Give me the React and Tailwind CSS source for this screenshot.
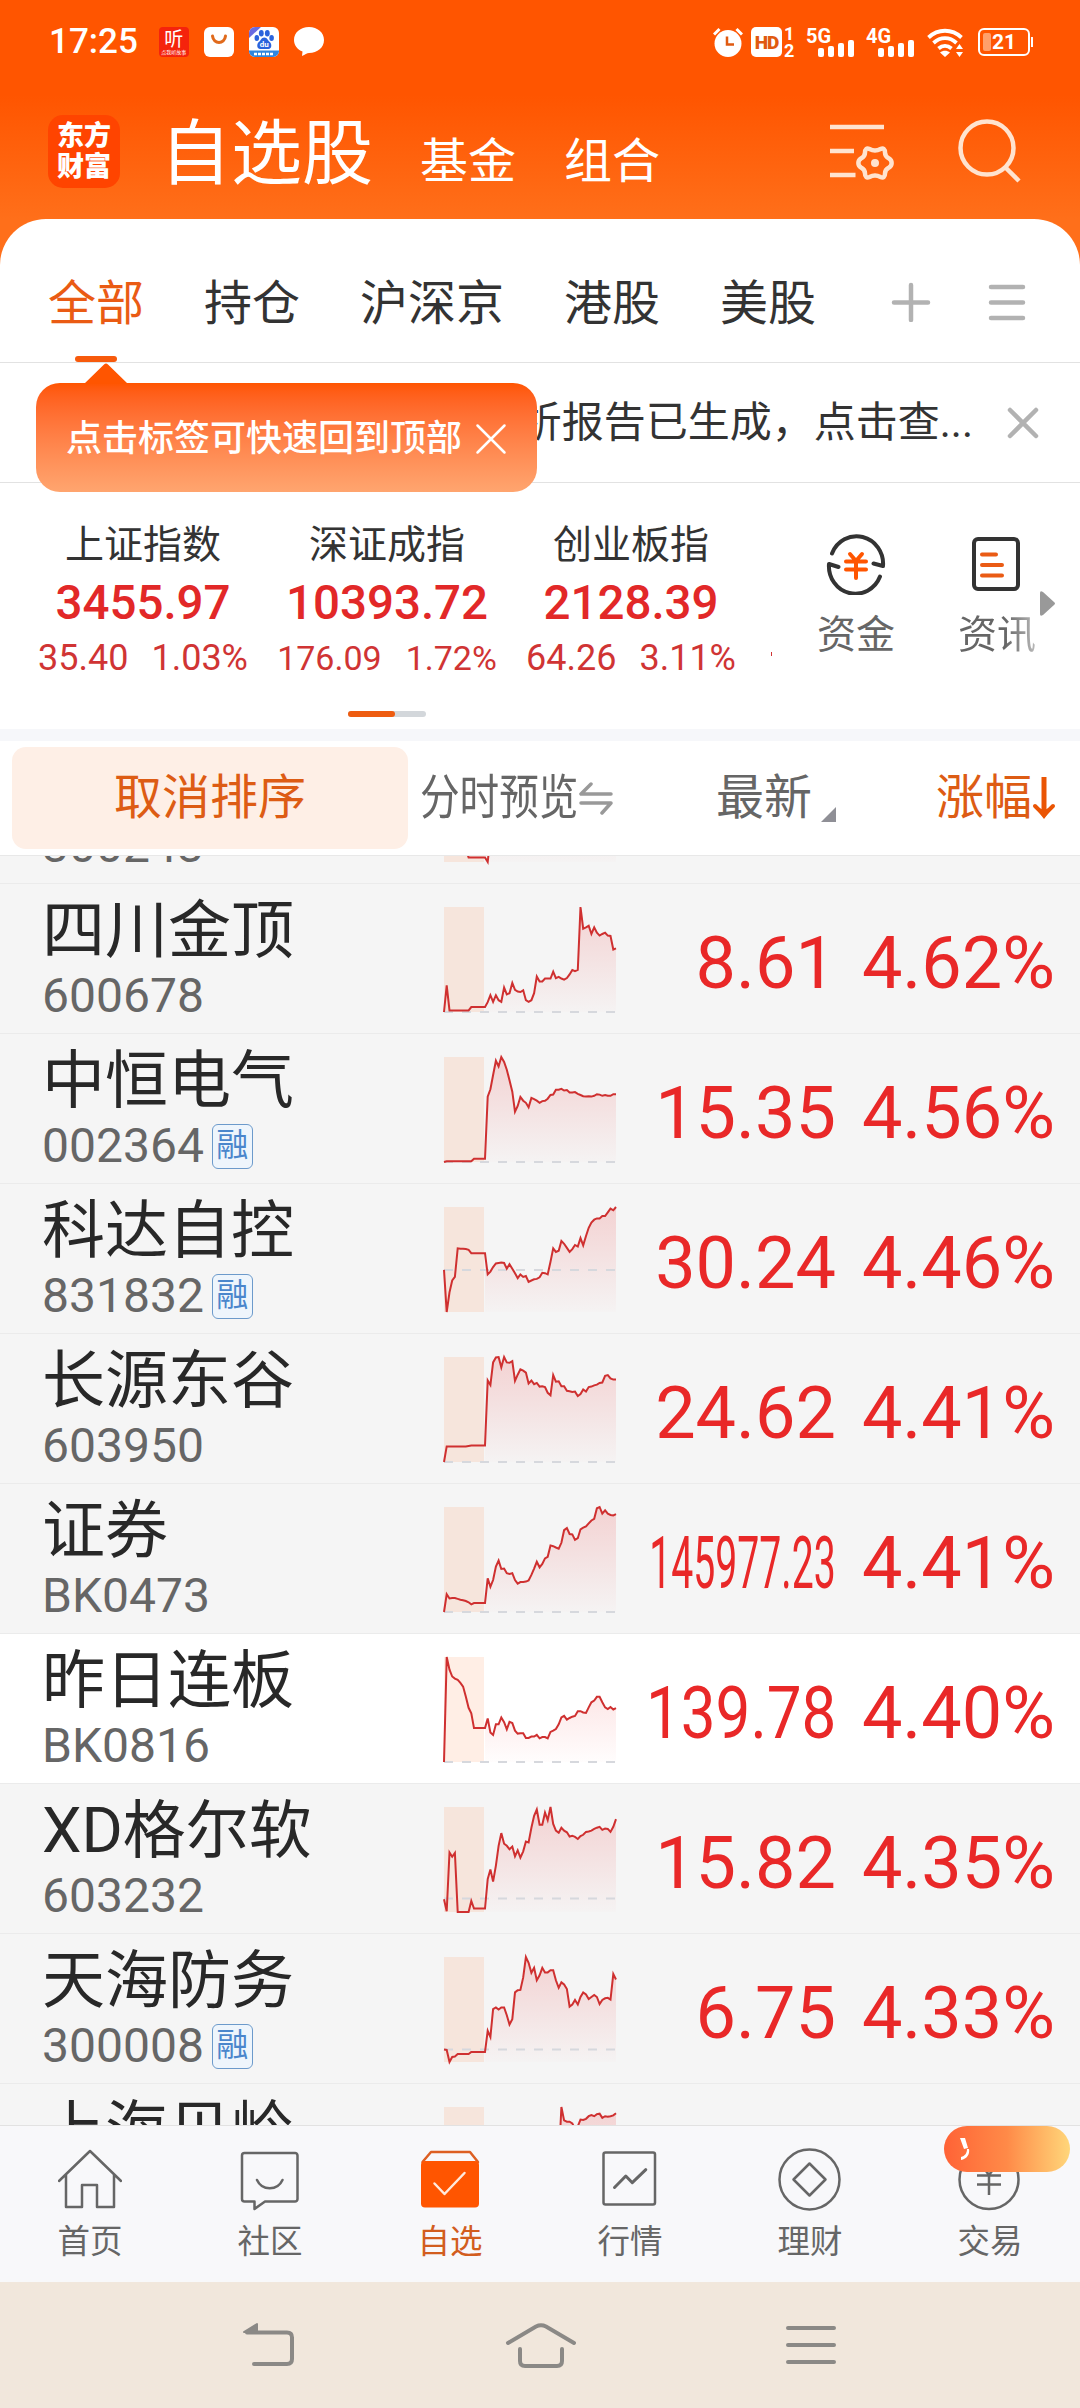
import React from "react";
import clsx from "clsx";

const tabs = ["全部", "持仓", "沪深京", "港股", "美股"];

const indexes = [
  { name: "上证指数", value: "3455.97", change: "35.40", rate: "1.03%" },
  { name: "深证成指", value: "10393.72", change: "176.09", rate: "1.72%", small: true },
  { name: "创业板指", value: "2128.39", change: "64.26", rate: "3.11%" },
];

// trend: 64 samples, base: the dashed "previous close" level
const stocks = [
  {
    name: "",
    code: "300243",
    price: "",
    rate: "",
    base: 120,
    trend: [90, 80, 70, 60, 50, 40, 30, 30, 30, 11, 11, 11, 11, 11, 11, 11, 0, 60, 120, 180, 200, 190, 180, 170, 180, 190, 200, 210, 220, 230, 240, 250, 240, 230, 220, 210, 200, 200, 200, 200, 200, 200, 200, 200, 200, 200, 200, 200, 200, 200, 200, 200, 200, 200, 200, 200, 200, 200, 200, 200, 200, 200, 200, 200],
  },
  {
    name: "四川金顶",
    code: "600678",
    price: "8.61",
    rate: "4.62%",
    base: 0,
    trend: [0, 65, 4, 4, 4, 4, 4, 4, 4, 4, 12, 12, 12, 12, 12, 12, 24, 41, 25, 41, 29, 25, 60, 43, 46, 71, 54, 50, 49, 53, 29, 25, 29, 46, 87, 75, 75, 82, 82, 82, 99, 83, 86, 82, 79, 83, 92, 103, 100, 103, 257, 204, 207, 211, 191, 207, 194, 187, 191, 194, 187, 186, 153, 156],
  },
  {
    name: "中恒电气",
    code: "002364",
    margin: true,
    price: "15.35",
    rate: "4.56%",
    base: 0,
    trend: [0, 2, 2, 2, 2, 2, 2, 2, 2, 2, 2, 8, 8, 8, 8, 8, 160, 178, 213, 248, 234, 257, 245, 226, 200, 172, 123, 137, 159, 150, 145, 134, 157, 154, 150, 145, 149, 150, 155, 164, 165, 177, 177, 179, 175, 176, 170, 170, 171, 167, 164, 161, 160, 161, 160, 162, 166, 165, 162, 164, 162, 162, 166, 166],
  },
  {
    name: "科达自控",
    code: "831832",
    margin: true,
    price: "30.24",
    rate: "4.46%",
    base: 103,
    trend: [103, 0, 48, 77, 86, 156, 155, 155, 154, 152, 144, 144, 144, 144, 144, 144, 92, 99, 110, 119, 120, 121, 120, 106, 117, 106, 95, 83, 92, 86, 88, 74, 77, 80, 81, 85, 96, 95, 92, 123, 156, 147, 150, 174, 167, 157, 147, 154, 164, 160, 181, 163, 186, 206, 219, 226, 229, 229, 235, 235, 244, 253, 249, 257],
  },
  {
    name: "长源东谷",
    code: "603950",
    price: "24.62",
    rate: "4.41%",
    base: 0,
    trend: [0, 38, 38, 38, 38, 38, 38, 38, 38, 39, 40, 40, 40, 40, 40, 40, 198, 187, 242, 254, 255, 230, 255, 242, 241, 245, 197, 212, 225, 222, 217, 191, 198, 189, 192, 183, 184, 182, 168, 162, 211, 195, 196, 184, 184, 173, 172, 170, 171, 160, 165, 176, 171, 182, 183, 186, 188, 192, 193, 209, 211, 203, 200, 200],
  },
  {
    name: "证券",
    code: "BK0473",
    price: "145977.23",
    fit: "scale-x-[0.544]",
    rate: "4.41%",
    base: 0,
    trend: [0, 42, 32, 33, 33, 31, 29, 28, 26, 23, 18, 21, 21, 21, 21, 21, 80, 60, 76, 108, 122, 102, 103, 92, 90, 92, 76, 67, 71, 71, 72, 75, 88, 103, 119, 106, 114, 127, 131, 158, 156, 153, 150, 164, 194, 199, 185, 184, 171, 175, 196, 200, 203, 210, 217, 221, 246, 249, 233, 241, 233, 230, 229, 232],
  },
  {
    name: "昨日连板",
    code: "BK0816",
    price: "139.78",
    fit: "scale-x-[0.86]",
    rate: "4.40%",
    plain: true,
    base: 0,
    trend: [0, 248, 218, 202, 197, 194, 187, 178, 155, 128, 115, 80, 80, 80, 80, 80, 103, 70, 64, 89, 89, 105, 94, 77, 95, 92, 74, 67, 68, 68, 57, 57, 60, 60, 64, 56, 59, 59, 56, 71, 74, 78, 89, 105, 109, 100, 104, 107, 109, 120, 120, 117, 116, 129, 141, 145, 154, 154, 141, 129, 125, 130, 124, 127],
  },
  {
    name: "XD格尔软",
    code: "603232",
    price: "15.82",
    rate: "4.35%",
    base: 32,
    trend: [30, 2, 141, 131, 140, 0, 0, 0, 0, 0, 26, 8, 8, 8, 8, 8, 78, 101, 72, 110, 157, 187, 162, 157, 149, 155, 132, 146, 129, 144, 167, 165, 200, 228, 243, 207, 207, 236, 218, 249, 209, 193, 188, 200, 193, 189, 179, 181, 178, 173, 180, 183, 190, 191, 193, 197, 200, 202, 195, 198, 197, 190, 202, 220],
  },
  {
    name: "天海防务",
    code: "300008",
    margin: true,
    price: "6.75",
    rate: "4.33%",
    base: 30,
    trend: [30, 29, 0, 12, 13, 19, 19, 19, 19, 19, 24, 24, 24, 24, 24, 24, 75, 60, 127, 131, 126, 131, 131, 112, 90, 103, 167, 172, 173, 203, 252, 238, 214, 226, 196, 208, 226, 215, 215, 220, 220, 196, 178, 191, 186, 175, 133, 138, 149, 138, 156, 167, 162, 151, 156, 161, 156, 139, 149, 153, 154, 150, 211, 198],
  },
  {
    name: "上海贝岭",
    code: "600171",
    price: "",
    rate: "",
    base: 0,
    trend: [0, 10, 10, 10, 10, 10, 10, 10, 10, 10, 10, 10, 10, 10, 10, 10, 30, 40, 50, 60, 60, 60, 60, 60, 60, 60, 60, 60, 60, 60, 60, 60, 60, 60, 60, 60, 60, 60, 60, 60, 60, 60, 120, 250, 218, 215, 215, 211, 198, 204, 220, 219, 222, 228, 231, 228, 233, 234, 224, 228, 227, 228, 230, 235],
  },
];

const navItems = [
  {
    label: "首页",
    icon: <path d="M1 33 32 3l31 30M8 27v32h16V37h15v22h17V27" />,
  },
  {
    label: "社区",
    icon: (
      <path d="M6.500 5H57a2.500 2.500 0 0 1 2.500 2.500V51a2.500 2.500 0 0 1-2.500 2.500H27L16.500 61v-7.500h-10A2.500 2.500 0 0 1 4 51V7.500A2.500 2.500 0 0 1 6.500 5zM19 32c5 11 20.500 11 25.500 0" />
    ),
  },
  {
    label: "自选",
    active: true,
    icon: (
      <>
        <path d="M4.500 14 13 4h39l8 10" stroke="#dd5f22" />
        <rect x="3" y="13" width="58" height="46.500" rx="4" fill="#ff5500" stroke="none" />
        <path d="m16.500 35.500 10 10.500 20-21" stroke="#ffe9dc" />
      </>
    ),
  },
  {
    label: "行情",
    icon: (
      <>
        <rect x="5.500" y="4.500" width="51.500" height="52" rx="2" />
        <path d="m16.500 39.500 11.300-11.500 6.500 6.700 13.500-13" strokeWidth="3" />
      </>
    ),
  },
  {
    label: "理财",
    icon: (
      <>
        <circle cx="31.500" cy="31.500" r="30" />
        <path d="m31.500 15.500 16 16-16 16-16-16z" />
      </>
    ),
  },
  {
    label: "交易",
    badge: true,
    icon: (
      <>
        <circle cx="31" cy="31.500" r="29.500" />
        <path d="M19 27.500h24M19 36.500h24M31 47V27M22 15l9 12 9-12" strokeLinecap="butt" />
      </>
    ),
  },
];

const SignalBars = ({ label }) => (
  <div className="relative h-[30px] w-[48px]">
    <span className="absolute -top-[2px] left-0 text-[20px] leading-[22px] font-bold">{label}</span>
    <div className="flex h-[30px] items-end justify-end gap-[4px]">
      <span className="h-[9px] w-[6px] rounded-[2px] bg-white"></span>
      <span className="h-[11px] w-[6px] rounded-[2px] bg-white"></span>
      <span className="h-[14px] w-[6px] rounded-[2px] bg-white"></span>
      <span className="h-[17px] w-[6px] rounded-[2px] bg-white"></span>
    </div>
  </div>
);

const StatusBar = () => (
  <div className="flex h-[84px] items-center justify-between pr-[47px] pl-[49px] text-white">
    <div className="flex items-center gap-[15px]">
      <span className="mr-[6px] text-[35px] leading-[36px] font-medium">17:25</span>
      <div className="flex h-[30px] w-[30px] flex-col items-center justify-center rounded-[4px] bg-[#f5230c]">
        <span className="h-[19px] text-[19px] leading-[19px]">听</span>
        <span className="h-[6px] text-[5px] leading-[6px]">点我听故事</span>
      </div>
      <svg className="h-[30px] w-[30px]" viewBox="0 0 30 30">
        <rect width="30" height="30" rx="6" fill="#fff" />
        <path d="M8.500 9c1 8.500 12 8.500 13 0" fill="none" stroke="#e06a1c" strokeWidth="3" strokeLinecap="round" />
      </svg>
      <svg className="h-[30px] w-[30px]" viewBox="0 0 30 30">
        <rect width="30" height="30" rx="6" fill="#fff" />
        <path d="M0 11V6a6 6 0 0 1 6-6h6z" fill="#6a6be0" />
        <path d="M0 23.500h30a6 6 0 0 1-6 6.500H6a6 6 0 0 1-6-6.500z" fill="#2f86e0" />
        <g fill="#2b63dc">
          <ellipse cx="12.300" cy="6.200" rx="2.400" ry="3.300" />
          <ellipse cx="18.300" cy="6.200" rx="2.400" ry="3.300" />
          <ellipse cx="7.800" cy="11" rx="2.300" ry="3" />
          <ellipse cx="22.600" cy="11" rx="2.300" ry="3" />
          <path d="M15.300 10.500c3 0 3.500 3 5.500 4.500s2.500 7-1.500 7h-8c-4 0-3.500-5.500-1.500-7s2.500-4.500 5.500-4.500z" />
        </g>
        <text x="15.200" y="20" fontSize="8" fontWeight="700" fill="#fff" textAnchor="middle">
          du
        </text>
        <path d="M5 27h20" stroke="#fff" strokeWidth="2.500" strokeDasharray="3 1" />
      </svg>
      <svg className="h-[30px] w-[30px]" viewBox="0 0 30 30">
        <path d="M15 0c8.500 0 15 5.500 15 13S23.500 26 15 26c-2 0-4 1.500-7 3l.5-4.500C3.500 22.500 0 18.500 0 13 0 5.500 6.500 0 15 0z" fill="#fff" />
      </svg>
    </div>

    <div className="flex items-center">
      <svg className="h-[30px] w-[30px]" viewBox="0 0 30 30">
        <circle cx="15" cy="16.500" r="13.500" fill="#fff" />
        <path d="M1 7.500 6.500 2M23.500 2 29 7.500" stroke="#fff" strokeWidth="3" />
        <path d="M14 9.500v8h7" fill="none" stroke="#e05a10" strokeWidth="2.500" />
      </svg>
      <div className="ml-[8px] flex h-[30px] w-[31px] items-center justify-center rounded-[5px] bg-white text-[19px] leading-none font-black tracking-tighter text-[#e05a10]">
        HD
      </div>
      <div className="ml-[2px] flex h-[34px] w-[12px] flex-col text-[18px] leading-[17px] font-bold">
        <span>1</span>
        <span>2</span>
      </div>
      <div className="ml-[10px] flex gap-[12px]">
        <SignalBars label="5G" />
        <SignalBars label="4G" />
      </div>
      <svg className="ml-[13px] h-[30px] w-[38px]" viewBox="0 0 38 30">
        <g fill="none" stroke="#fff" strokeWidth="3.800">
          <path d="M1.500 10.500c9.500-9 23.500-9 33 0" />
          <path d="M6.500 16c7-6.500 16-6.500 23 0" />
          <path d="M11.500 21.500c4-3.500 9-3.500 13 0" />
        </g>
        <path d="m18 30-5-4.500c3-2.500 7-2.500 10 0zM29 22l3.500-5 3.500 5zM29 25l3.500 5 3.500-5z" fill="#fff" />
      </svg>
      <div className="ml-[13px] flex h-[28px] w-[52px] items-center rounded-[6px] border-2 border-white pl-[3px]">
        <span className="h-[18px] w-[8px] rounded-[2px] bg-[#ffa06b]"></span>
        <span className="ml-[1px] text-[21px] leading-[22px] font-bold">21</span>
      </div>
      <span className="ml-[1px] h-[10px] w-[2px] bg-white"></span>
    </div>
  </div>
);

const Header = () => (
  <div className="flex h-[135px] text-white">
    <div className="mt-[31px] ml-[48px] flex h-[73px] w-[72px] flex-col items-center justify-center rounded-[15px] bg-[#ff4400] text-[27px] leading-[31px] font-black">
      <span>东方</span>
      <span>财富</span>
    </div>
    <div className="mt-[18px] ml-[40px] flex h-[104px] items-baseline">
      <span className="text-[71px] leading-[104px]">自选股</span>
      <span className="ml-[47px] text-[48px]">基金</span>
      <span className="ml-[48px] text-[48px]">组合</span>
    </div>
    <svg className="mt-[35px] ml-auto h-[66px] w-[66px]" viewBox="0 0 66 66" fill="none" stroke="#ffe3cf" strokeWidth="4.500">
      <path d="M1 8h54M1 32h24M1 56h25.500" />
      <path
        d="M40.500 30q5.500 3 11 0c3-1.500 4.500 .5 4.500 3.500 0 3 1 4.500 4 6 3.500 2 3.500 7 0 9-3 1.500-4 3-4 6 0 3-1.500 5-4.500 3.500q-5.500-3-11 0c-3 1.500-4.500-.5-4.500-3.500 0-3-1-4.500-4-6-3.500-2-3.500-7 0-9 3-1.500 4-3 4-6 0-3 1.500-5 4.500-3.500z"
        strokeWidth="4.500"
      />
      <circle cx="46" cy="44" r="4" fill="#ffe3cf" stroke="none" />
    </svg>
    <svg className="mt-[33px] mr-[58px] ml-[61px] h-[66px] w-[66px]" viewBox="0 0 66 66" fill="none" stroke="#ffe3cf" strokeWidth="4.500">
      <circle cx="31" cy="31" r="26.500" />
      <path d="m49 50 14 14" />
    </svg>
  </div>
);

const TabBar = () => (
  <div className="flex h-[144px] rounded-t-[46px] border-b border-[#e2e2e2] bg-white pl-[48px]">
    <div className="flex h-full gap-[60px]">
      {tabs.map((tab, index) => (
        <div
          key={tab}
          className={clsx(
            "relative h-full pt-[52px] text-[48px] leading-[66px] whitespace-nowrap",
            index === 0 ? "text-[#ea5b14]" : "text-[#333]"
          )}
        >
          {tab}
          {index === 0 && (
            <span className="absolute bottom-0 left-[27px] h-[6px] w-[42px] rounded-full bg-[#f75a0c]"></span>
          )}
        </div>
      ))}
    </div>
    <svg className="mt-[63px] ml-[75px] h-[40px] w-[40px]" viewBox="0 0 40 40" stroke="#b2b2b2" strokeWidth="4.500" strokeLinecap="round">
      <path d="M20 3v35M3 20.500h34" />
    </svg>
    <svg className="mt-[63px] ml-[57px] h-[40px] w-[38px]" viewBox="0 0 38 40" stroke="#b2b2b2" strokeWidth="4.500" strokeLinecap="round">
      <path d="M3 5h32M3 20.500h32M3 36h32" />
    </svg>
  </div>
);

const Notice = () => (
  <div className="relative flex h-[120px] items-center justify-end border-b border-[#e2e2e2] bg-white pr-[41px]">
    <span className="text-[42px] leading-[60px] text-[#333]">析报告已生成，点击查...</span>
    <svg className="ml-[34px] h-[32px] w-[32px]" viewBox="0 0 32 32" stroke="#b2b2b2" strokeWidth="4.500" strokeLinecap="round">
      <path d="m3 3 26 26M29 3 3 29" />
    </svg>

    {/* tip bubble that points at the first tab */}
    <div className="absolute top-0 left-[36px] z-10">
      <svg className="ml-[48px] h-[21px] w-[44px]" viewBox="0 0 44 21">
        <path d="M0 21 20 1.500q2-2 4 0L44 21z" fill="#ff5500" />
      </svg>
      <div className="-mt-px flex h-[109px] w-[501px] items-center rounded-[24px] bg-linear-to-b from-[#ff5500] to-[#ffa56f] pt-[2px] pl-[30px] text-white">
        <span className="text-[36px] leading-[50px] font-medium whitespace-nowrap">点击标签可快速回到顶部</span>
        <svg className="ml-[13px] h-[32px] w-[32px]" viewBox="0 0 32 32" stroke="#fff" strokeWidth="2.500" strokeLinecap="round">
          <path d="m2.500 2.500 27 27M29.500 2.500l-27 27" />
        </svg>
      </div>
    </div>
  </div>
);

const IndexPanel = () => (
  <div className="relative h-[246px] bg-white">
    <div className="flex">
      <div className="flex w-[773px] pl-[21px]">
        {indexes.map((item) => (
          <div key={item.name} className="flex w-[244px] flex-col items-center whitespace-nowrap">
            <span className="mt-[33px] h-[57px] text-[39px] leading-[58px] text-[#333]">{item.name}</span>
            <span className="h-[60px] text-[47.500px] leading-[60px] font-medium text-[#e22828]">{item.value}</span>
            <span
              className={clsx(
                "flex h-[50px] text-[#d03434]",
                item.small ? "gap-[24px] text-[34px] leading-[51px]" : "gap-[23px] text-[36px] leading-[50px]"
              )}
            >
              <span>{item.change}</span>
              <span>{item.rate}</span>
            </span>
          </div>
        ))}
        <span className="mt-[169px] ml-[18px] h-[4px] w-px shrink-0 bg-[#d03434]"></span>
      </div>
      <div className="ml-[44px] flex w-[78px] flex-col items-center">
        <svg className="mt-[50px] h-[62px] w-[62px]" viewBox="0 0 62 62" fill="none" stroke="#333" strokeWidth="4" strokeLinecap="round" strokeLinejoin="round">
          <path d="M7 20.500A26.500 27.500 0 0 1 58 33L48.500 30.500" />
          <path d="M55 43.500A26.500 27.500 0 0 1 4 31L13.500 34" />
          <g stroke="#ff5500">
            <path d="m25 21 6 7 6-7M21 28.500h20M21 36.500h20M31 28v17" />
          </g>
        </svg>
        <span className="text-[39px] leading-[80px] text-[#666]">资金</span>
      </div>
      <div className="ml-[63px] flex w-[78px] flex-col items-center">
        <svg className="mt-[50px] h-[62px] w-[62px]" viewBox="0 0 62 62" fill="none" strokeWidth="4" strokeLinecap="round">
          <rect x="8" y="6" width="44" height="50" rx="4" stroke="#333" />
          <path d="M16 21.500h14M16 32h20M16 42.500h20" stroke="#ea5b14" />
        </svg>
        <span className="bg-linear-to-r from-[#666] from-60% to-[#bbb] bg-clip-text text-[39px] leading-[80px] text-transparent">资讯</span>
      </div>
      <svg className="mt-[108px] ml-[4px] h-[25px] w-[15px]" viewBox="0 0 15 25">
        <path d="M0 2q0-3 3-1l11 10q2 1.500 0 3L3 24q-3 2-3-1z" fill="#999" />
      </svg>
    </div>
    <div className="absolute bottom-[12px] left-[348px] h-[6px] w-[78px] rounded-full bg-[#d3d7db]">
      <div className="h-full w-[47px] rounded-full bg-[#ee5c10]"></div>
    </div>
  </div>
);

const ListHeader = () => (
  <div className="flex h-[126px] items-center border-t-[12px] border-[#f6f7fa] bg-white pl-[12px] text-[48px] leading-[102px] whitespace-nowrap text-[#666]">
    <div className="h-[102px] w-[396px] rounded-[14px] bg-[#feefe6] text-center text-[#dd5c14]">取消排序</div>
    <div className="ml-[12px] h-[102px] w-[158px]">
      <span className="inline-block origin-left scale-x-[0.825]">分时预览</span>
    </div>
    <svg className="h-[34px] w-[36px]" viewBox="0 0 36 34" fill="none" stroke="#999" strokeWidth="3.500" strokeLinecap="round" strokeLinejoin="round">
      <path d="M13 3 3 13h30M3 22h30L24 32" />
    </svg>
    <span className="ml-[102px] h-[102px]">最新</span>
    <svg className="mt-[33px] ml-[9px] h-[15px] w-[15px]" viewBox="0 0 15 15">
      <path d="M15 0v15H0z" fill="#8f8f96" />
    </svg>
    <span className="ml-[100px] h-[102px] text-[#dd5c14]">涨幅</span>
    <svg className="h-[44px] w-[24px]" viewBox="0 0 24 44" fill="none" stroke="#ea5504" strokeWidth="5">
      <path d="M12 1v34" />
      <path d="m3 30 9 9 9-9" strokeWidth="4" strokeLinecap="round" />
      <path d="m2 30 10 13 10-13-10 4z" fill="#ea5504" stroke="none" />
    </svg>
  </div>
);

const TrendChart = ({ id, trend, base }) => {
  const width = 172;
  const height = 105;
  const max = Math.max(...trend);
  const y = (value) => height - (value / max) * height;
  const points = trend.map((value, index) => [(index * width) / (trend.length - 1), y(value)]);
  const line = points.map(([px, py]) => `${px.toFixed(1)},${py.toFixed(1)}`).join(" ");
  const area = points
    .slice(15)
    .map(([px, py]) => `${px.toFixed(1)},${py.toFixed(1)}`)
    .join(" ");

  return (
    <svg className="mt-[23px] h-[105px] w-[172px] overflow-visible" viewBox="0 0 172 105">
      <defs>
        <linearGradient id={id} gradientUnits="userSpaceOnUse" x1="0" y1="0" x2="0" y2="105">
          <stop offset="0" stopColor="#eb2727" stopOpacity="0.17" />
          <stop offset="1" stopColor="#eb2727" stopOpacity="0.01" />
        </linearGradient>
      </defs>
      <rect width="40" height="105" fill="#ff5500" fillOpacity="0.1" />
      <polygon points={`41,105 ${area} 172,105`} fill={`url(#${id})`} />
      <path d={`M0 ${y(base)}H172`} stroke="#d6d8dd" strokeWidth="2" strokeDasharray="9 9" />
      <polyline points={line} fill="none" stroke="#cf3030" strokeWidth="2" />
    </svg>
  );
};

const StockRow = ({ stock, id }) => (
  <div className={clsx("flex h-[150px] border-t border-[#ebebeb] pl-[42px]", stock.plain ? "bg-white" : "bg-[#f5f5f5]")}>
    <div className="w-[402px] whitespace-nowrap">
      <div className="h-[88px] pt-[4px] text-[63px] leading-[86px] text-[#282828]">{stock.name}</div>
      <div className="flex h-[48px] items-center">
        <span className="text-[48px] leading-[48px] text-[#666]">{stock.code}</span>
        {stock.margin && (
          <span className="ml-[8px] h-[45px] w-[41px] rounded-[6px] border border-[#6c9acb] bg-[#eef5fc] text-center text-[32px] leading-[41px] text-[#4a86cc]">
            融
          </span>
        )}
      </div>
    </div>
    <TrendChart id={id} trend={stock.trend} base={stock.base} />
    <div className="flex w-[220px] justify-end text-[72px] leading-[159px] text-[#e92828]">
      <span className={clsx("origin-right", stock.fit)}>{stock.price}</span>
    </div>
    <div className="w-[219px] text-right text-[72px] leading-[159px] text-[#e92828]">{stock.rate}</div>
  </div>
);

const BottomNav = () => (
  <div className="grid h-[157px] grid-cols-6 border-t border-[#e2e2e2] bg-[#f8f8fa]">
    {navItems.map((item) => (
      <div key={item.label} className="relative flex flex-col items-center pt-[22px]">
        <svg className="h-[64px] w-[64px]" viewBox="0 0 64 64" fill="none" stroke="#666" strokeWidth="2.500" strokeLinecap="round" strokeLinejoin="round">
          {item.icon}
        </svg>
        <span className={clsx("mt-[6px] text-[32.500px] leading-[48px]", item.active ? "text-[#d25d1e]" : "text-[#666]")}>
          {item.label}
        </span>
        {item.badge && (
          <div className="absolute top-0 left-[44px] h-[46px] w-[126px] rounded-full bg-linear-to-r from-[#ff6236] via-[#ff8a48] to-[#ffd67a]">
            <svg className="mt-[12px] ml-[16px] h-[22px] w-[10px]" viewBox="0 0 10 22" fill="#fff">
              <path d="M0 0h5l3 10-4 1zM7 11h2c1 5-2 10-8 11v-3c4-1 6-4 6-8z" />
            </svg>
          </div>
        )}
      </div>
    ))}
  </div>
);

const SystemNav = () => (
  <div className="flex h-[126px] items-start bg-[#f1e7dc] pt-[36px] pl-[241px]">
    <svg className="h-[54px] w-[56px]" viewBox="0 0 56 54" fill="none" stroke="#8b8986" strokeWidth="4" strokeLinecap="round">
      <path d="M6 14.500h40q5 0 5 5V41q0 5-5 5H13" />
      <path d="M3 14 16 6v8z" fill="#8b8986" strokeWidth="2" strokeLinejoin="round" />
    </svg>
    <svg className="ml-[207px] h-[54px] w-[74px]" viewBox="0 0 74 54" fill="none" stroke="#8b8986" strokeWidth="4" strokeLinecap="round">
      <path d="m4 25 28-16.500q5-2.500 10 0L70 25" />
      <path d="M16 31v12q0 5 5 5h32q5 0 5-5V31" />
    </svg>
    <svg className="ml-[206px] h-[54px] w-[54px]" viewBox="0 0 54 54" stroke="#8b8986" strokeWidth="4" strokeLinecap="round">
      <path d="M4 10h46M4 27h46M4 44h46" />
    </svg>
  </div>
);

const App = () => {
  return (
    <div className="h-[2408px] w-[1080px] overflow-hidden bg-white font-[Roboto,'Noto_Sans_CJK_SC',sans-serif]">
      <div className="bg-[linear-gradient(180deg,#ff5500_0,#ff5500_95px,#ff6f1a_219px,#ff6f1a_100%)]">
        <StatusBar />
        <Header />
        <TabBar />
      </div>
      <Notice />
      <IndexPanel />
      <ListHeader />
      <div className="h-[1270px] overflow-hidden border-t border-[#e8e8e8]">
        <div className="-mt-[123px]">
          {stocks.map((stock) => (
            <StockRow key={stock.code} id={`trend-${stock.code}`} stock={stock} />
          ))}
        </div>
      </div>
      <BottomNav />
      <SystemNav />
    </div>
  );
};

export default App;
